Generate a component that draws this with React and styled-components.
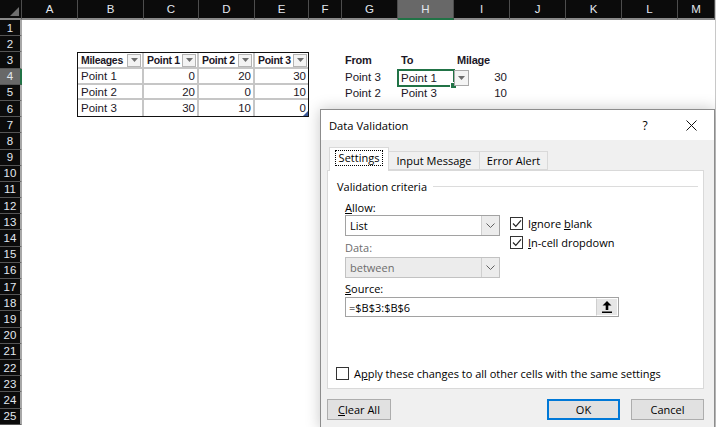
import styled, { createGlobalStyle } from 'styled-components'

const GlobalStyle = createGlobalStyle`
  html, body {
    margin: 0;
    padding: 0;
    background: #fff;
  }
  body {
    width: 716px;
    height: 427px;
    overflow: hidden;
  }
`

const COLS = ['A', 'B', 'C', 'D', 'E', 'F', 'G', 'H', 'I', 'J', 'K', 'L', 'M']
const ROWS = Array.from({ length: 25 }, (_, i) => i + 1)

const tableRows = [
  ['Point 1', '0', '20', '30'],
  ['Point 2', '20', '0', '10'],
  ['Point 3', '30', '10', '0'],
]

export default function App() {
  return (
    <Page>
      <GlobalStyle />
      <Sheet>
        {/* column headers */}
        <Corner>
          <svg width='9' height='9' viewBox='0 0 9 9'>
            <polygon points='9,0 9,9 0,9' fill='#6f6f6f' />
          </svg>
        </Corner>
        {COLS.map((c, i) => (
          <ColHead key={c} $col={i + 2} $active={c === 'H'}>
            {c}
          </ColHead>
        ))}

        {/* row headers */}
        {ROWS.map((r) => (
          <RowHead key={r} $row={r + 1} $active={r === 4}>
            {r}
          </RowHead>
        ))}

        {/* mileage table */}
        <TableBox>
          {['Mileages', 'Point 1', 'Point 2', 'Point 3'].map((h, i) => (
            <TCell key={h} $head $last={i === 3}>
              <span>{h}</span>
              <FilterBtn>
                <Caret />
              </FilterBtn>
            </TCell>
          ))}
          {tableRows.map((row, ri) =>
            row.map((v, ci) => (
              <TCell
                key={ri + '-' + ci}
                $num={ci > 0}
                $last={ci === 3}
                $bottom={ri === 2}
              >
                {v}
                {ri === 2 && ci === 3 && <ResizeHandle />}
              </TCell>
            ))
          )}
        </TableBox>

        {/* from / to list */}
        <Cell $row={4} $col={8} $bold>From</Cell>
        <Cell $row={4} $col={9} $bold>To</Cell>
        <Cell $row={4} $col={10} $bold>Milage</Cell>
        <Cell $row={5} $col={8}>Point 3</Cell>
        <Cell $row={5} $col={9} $selected>
          Point 1
          <FillHandle />
          <CellDrop>
            <Caret />
          </CellDrop>
        </Cell>
        <Cell $row={5} $col={10} $num>30</Cell>
        <Cell $row={6} $col={8}>Point 2</Cell>
        <Cell $row={6} $col={9}>Point 3</Cell>
        <Cell $row={6} $col={10} $num>10</Cell>
      </Sheet>

      <Dialog>
        <TitleBar>
          <Title>Data Validation</Title>
          <CaptionBtn>?</CaptionBtn>
          <CaptionBtn>
            <svg width='11' height='11' viewBox='0 0 11 11'>
              <path d='M0.5 0.5 L10.5 10.5 M10.5 0.5 L0.5 10.5' stroke='#111' strokeWidth='1' />
            </svg>
          </CaptionBtn>
        </TitleBar>

        <DialogBody>
          <TabStrip>
            <Tab $active $w={60}>
              <Focus>Settings</Focus>
            </Tab>
            <Tab $w={92}>Input Message</Tab>
            <Tab $w={69}>Error Alert</Tab>
          </TabStrip>

          <Panel>
            <Legend>
              <span>Validation criteria</span>
              <Rule />
            </Legend>

            <Criteria>
              <LeftCol>
                <Label $gap={5}>
                  <u>A</u>llow:
                </Label>
                <Combo>
                  <ComboText>List</ComboText>
                  <ComboBtn>
                    <Chevron />
                  </ComboBtn>
                </Combo>
                <Label $gap={3} $muted>Data:</Label>
                <Combo $disabled $gap={2}>
                  <ComboText>between</ComboText>
                  <ComboBtn $disabled>
                    <Chevron />
                  </ComboBtn>
                </Combo>
              </LeftCol>
              <RightCol>
                <CheckRow>
                  <Box $checked><Tick /></Box>
                  <span>Ignore <u>b</u>lank</span>
                </CheckRow>
                <CheckRow $gap={3}>
                  <Box $checked><Tick /></Box>
                  <span><u>I</u>n-cell dropdown</span>
                </CheckRow>
              </RightCol>
            </Criteria>

            <SourceBlock>
              <Label $gap={2}>
                <u>S</u>ource:
              </Label>
              <SourceField>
                <SourceText>=$B$3:$B$6</SourceText>
                <RefBtn>
                  <svg width='10' height='12' viewBox='0 0 10 12'>
                    <polygon points='5,0 9.5,4.5 6.3,4.5 6.3,9 3.7,9 3.7,4.5 0.5,4.5' fill='#000' />
                    <rect x='0' y='10.5' width='10' height='1.5' fill='#000' />
                  </svg>
                </RefBtn>
              </SourceField>
            </SourceBlock>

            <ApplyRow>
              <Box />
              <span>A<u>p</u>ply these changes to all other cells with the same settings</span>
            </ApplyRow>
          </Panel>

          <ButtonRow>
            <Button $w={64}>
              <u>C</u>lear All
            </Button>
            <Spacer />
            <Button $w={73} $primary>OK</Button>
            <Button $w={73} $ml={11}>Cancel</Button>
          </ButtonRow>
        </DialogBody>
      </Dialog>
    </Page>
  )
}

/* small drawings */
function Caret() {
  return (
    <svg width='7' height='4' viewBox='0 0 7 4'>
      <polygon points='0,0 7,0 3.5,4' fill='#6e6e6e' />
    </svg>
  )
}

function Chevron() {
  return (
    <svg width='9' height='5' viewBox='0 0 9 5'>
      <polyline points='0.5,0.5 4.5,4.5 8.5,0.5' fill='none' stroke='#606060' strokeWidth='1' />
    </svg>
  )
}

function Tick() {
  return (
    <svg width='10' height='9' viewBox='0 0 10 9'>
      <polyline points='1,4.5 3.8,7.3 9,1.3' fill='none' stroke='#222' strokeWidth='1.2' />
    </svg>
  )
}

/* ---------- sheet ---------- */
const Page = styled.div`
  position: relative;
  width: 716px;
  height: 427px;
  overflow: hidden;
  background: #fff;
`

const Sheet = styled.div`
  display: grid;
  grid-template-columns: 22px 56px 66px 55px 56px 54px 33px 56px 56px 56px 56px 56px 56px 1fr;
  grid-template-rows: 20px repeat(25, 16.2px);
  width: 716px;
  height: 427px;
  font-family: 'Liberation Sans', Arial, sans-serif;
  border-right: 1px solid #c8c8c8;
  box-sizing: border-box;
`

const Corner = styled.div`
  grid-row: 1;
  grid-column: 1;
  background: #0b0b0b;
  border-right: 1px solid #4d4d4d;
  border-bottom: 2px solid #8a8a8a;
  display: flex;
  align-items: flex-end;
  justify-content: flex-end;
  padding: 0 2px 2px 0;
`

const ColHead = styled.div`
  grid-row: 1;
  grid-column: ${(p) => p.$col};
  background: ${(p) => (p.$active ? '#686868' : '#0b0b0b')};
  border-right: 1px solid #4d4d4d;
  border-bottom: 2px solid ${(p) => (p.$active ? '#217346' : '#8a8a8a')};
  color: #e2e8ef;
  font-size: 11.5px;
  display: flex;
  align-items: center;
  justify-content: center;
`

const RowHead = styled.div`
  grid-row: ${(p) => p.$row};
  grid-column: 1;
  background: ${(p) => (p.$active ? '#686868' : '#0b0b0b')};
  border-bottom: 1px solid #555;
  border-right: 2px solid ${(p) => (p.$active ? '#217346' : '#a8a8a8')};
  color: #e2e8ef;
  font-size: 11.5px;
  display: flex;
  align-items: center;
  justify-content: center;
  box-sizing: border-box;
`

const Cell = styled.div`
  grid-row: ${(p) => p.$row};
  grid-column: ${(p) => p.$col};
  position: relative;
  display: flex;
  align-items: center;
  justify-content: ${(p) => (p.$num ? 'flex-end' : 'flex-start')};
  padding: 0 3px;
  font-size: ${(p) => (p.$bold ? '11px' : '11.5px')};
  font-weight: ${(p) => (p.$bold ? 700 : 400)};
  letter-spacing: ${(p) => (p.$bold ? '-0.2px' : '0')};
  color: #1c1726;
  white-space: nowrap;
  ${(p) =>
    p.$selected &&
    `
    border: 2px solid #217346;
    margin: 0 -1px -2px -1px;
    padding: 0 2px 0 2px;
  `}
`

const FillHandle = styled.span`
  position: absolute;
  right: -4px;
  bottom: -4px;
  width: 5px;
  height: 5px;
  background: #217346;
  border: 1px solid #fff;
`

const CellDrop = styled.span`
  position: absolute;
  left: calc(100% + 1px);
  top: -1px;
  width: 15px;
  height: 16px;
  box-sizing: border-box;
  border: 1px solid #a9a9a9;
  background: #f4f4f4;
  display: flex;
  align-items: center;
  justify-content: center;
`

const TableBox = styled.div`
  grid-row: 4 / 8;
  grid-column: 3 / 7;
  display: grid;
  grid-template-columns: 66px 55px 56px 1fr;
  grid-template-rows: repeat(4, 1fr);
  border: 1px solid #111;
  margin-left: -1px;
`

const TCell = styled.div`
  position: relative;
  display: flex;
  align-items: center;
  justify-content: ${(p) => (p.$head ? 'space-between' : p.$num ? 'flex-end' : 'flex-start')};
  padding: ${(p) => (p.$head ? '0 1px 0 3px' : '0 2px 0 3px')};
  border-right: ${(p) => (p.$last ? 'none' : '2px solid #c6c6c6')};
  border-bottom: ${(p) => (p.$bottom ? 'none' : '2px solid #c6c6c6')};
  font-size: ${(p) => (p.$head ? '10.5px' : '11.5px')};
  font-weight: ${(p) => (p.$head ? 700 : 400)};
  letter-spacing: ${(p) => (p.$head ? '-0.3px' : '0')};
  color: #1c1726;
  white-space: nowrap;
  overflow: hidden;
`

const FilterBtn = styled.span`
  width: 14px;
  height: 13px;
  box-sizing: border-box;
  border: 1px solid #b4b4b4;
  background: #f3f3f3;
  display: flex;
  align-items: center;
  justify-content: center;
  flex-shrink: 0;
`

const ResizeHandle = styled.span`
  position: absolute;
  right: 0;
  bottom: 0;
  width: 0;
  height: 0;
  border-left: 5px solid transparent;
  border-bottom: 5px solid #3b5998;
`

/* ---------- dialog ---------- */
const Dialog = styled.div`
  position: absolute;
  left: 320px;
  top: 109px;
  width: 395px;
  height: 320px;
  box-sizing: border-box;
  border: 1px solid #8c8c8c;
  background: #f0f0f0;
  box-shadow: 0 0 14px rgba(0, 0, 0, 0.22);
  font-family: 'Open Sans', 'Noto Sans', sans-serif;
  font-size: 11px;
  color: #000;
  display: flex;
  flex-direction: column;
`

const TitleBar = styled.div`
  height: 30px;
  background: #fff;
  display: flex;
  align-items: center;
  padding-left: 8px;
`

const Title = styled.div`
  flex: 1;
  font-size: 11.2px;
`

const CaptionBtn = styled.div`
  width: 46px;
  height: 30px;
  display: flex;
  align-items: center;
  justify-content: center;
  font-size: 12px;
`

const DialogBody = styled.div`
  padding: 7px 10px 0 6px;
  display: flex;
  flex-direction: column;
`

const TabStrip = styled.div`
  display: flex;
  align-items: flex-end;
  height: 23px;
  padding-left: 2px;
  position: relative;
  z-index: 2;
`

const Tab = styled.div`
  box-sizing: border-box;
  width: ${(p) => p.$w}px;
  height: ${(p) => (p.$active ? '24px' : '19px')};
  margin-bottom: ${(p) => (p.$active ? '-1px' : '0')};
  margin-left: ${(p) => (p.$active ? '0' : '-1px')};
  background: ${(p) => (p.$active ? '#fff' : '#f0f0f0')};
  border: 1px solid #d9d9d9;
  border-bottom: ${(p) => (p.$active ? 'none' : '1px solid #d9d9d9')};
  display: flex;
  align-items: center;
  justify-content: center;
  padding-bottom: ${(p) => (p.$active ? '3px' : '0')};
  white-space: nowrap;
`

const Focus = styled.span`
  border: 1px dotted #000;
  padding: 0 3px;
  line-height: 14px;
`

const Panel = styled.div`
  box-sizing: border-box;
  height: 219px;
  background: #fff;
  border: 1px solid #d9d9d9;
  display: flex;
  flex-direction: column;
  padding: 7px 0;
  position: relative;
  z-index: 1;
`

const Legend = styled.div`
  display: flex;
  align-items: center;
  height: 16px;
  padding-left: 9px;
`

const Rule = styled.div`
  flex: 1;
  height: 1px;
  background: #dcdcdc;
  margin: 0 5px 0 6px;
`

const Criteria = styled.div`
  display: flex;
  align-items: flex-start;
  padding-left: 17px;
  gap: 10px;
`

const LeftCol = styled.div`
  display: flex;
  flex-direction: column;
  width: 155px;
`

const RightCol = styled.div`
  display: flex;
  flex-direction: column;
  margin-top: 21px;
`

const Label = styled.div`
  height: 16px;
  display: flex;
  align-items: center;
  margin-top: ${(p) => p.$gap || 0}px;
  color: ${(p) => (p.$muted ? '#6d6d6d' : '#000')};
`

const Combo = styled.div`
  box-sizing: border-box;
  height: 21px;
  margin-top: ${(p) => p.$gap || 0}px;
  display: flex;
  border: 1px solid ${(p) => (p.$disabled ? '#c2c2c2' : '#a2a2a2')};
  background: ${(p) => (p.$disabled ? '#ececec' : '#fff')};
  color: ${(p) => (p.$disabled ? '#6d6d6d' : '#000')};
`

const ComboText = styled.div`
  flex: 1;
  display: flex;
  align-items: center;
  padding-left: 4px;
`

const ComboBtn = styled.div`
  width: 17px;
  display: flex;
  align-items: center;
  justify-content: center;
  background: #ececec;
  border-left: 1px solid #cfcfcf;
`

const CheckRow = styled.div`
  display: flex;
  align-items: center;
  height: 16px;
  margin-top: ${(p) => p.$gap || 0}px;
  white-space: nowrap;
`

const Box = styled.span`
  box-sizing: border-box;
  width: 13px;
  height: 13px;
  border: 1px solid #333;
  background: #fff;
  margin-right: 5px;
  display: flex;
  align-items: center;
  justify-content: center;
  flex-shrink: 0;
`

const SourceBlock = styled.div`
  display: flex;
  flex-direction: column;
  padding-left: 17px;
`

const SourceField = styled.div`
  box-sizing: border-box;
  width: 274px;
  height: 20px;
  margin-top: 1px;
  display: flex;
  border: 1px solid #a2a2a2;
  background: #fff;
`

const SourceText = styled.div`
  flex: 1;
  display: flex;
  align-items: center;
  padding-left: 3px;
`

const RefBtn = styled.div`
  width: 20px;
  display: flex;
  align-items: center;
  justify-content: center;
  background: #e6e6e6;
  border: 1px solid #fff;
  border-left: 1px solid #cfcfcf;
`

const ApplyRow = styled.div`
  margin-top: auto;
  display: flex;
  align-items: center;
  height: 16px;
  padding-left: 8px;
  white-space: nowrap;
`

const ButtonRow = styled.div`
  display: flex;
  margin-top: 10px;
`

const Spacer = styled.div`
  flex: 1;
`

const Button = styled.div`
  box-sizing: border-box;
  width: ${(p) => p.$w}px;
  height: 21px;
  margin-left: ${(p) => p.$ml || 0}px;
  background: #e1e1e1;
  border: ${(p) => (p.$primary ? '2px solid #0078d7' : '1px solid #adadad')};
  display: flex;
  align-items: center;
  justify-content: center;
`
